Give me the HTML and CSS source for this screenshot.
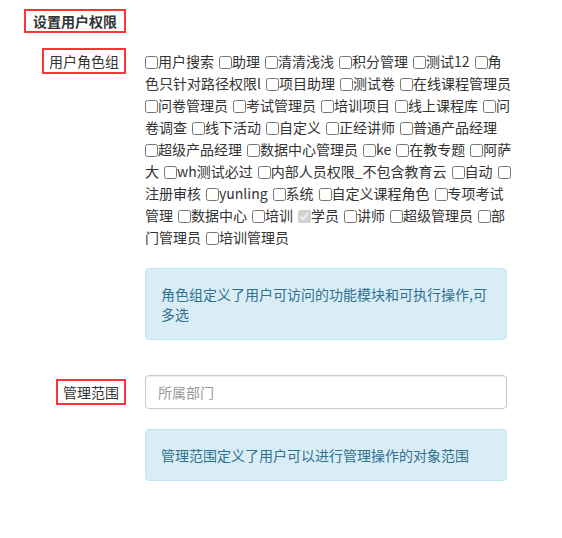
FILE: index.html
```html
<!DOCTYPE html>
<html lang="zh-CN">
<head>
    <meta charset="UTF-8">
    <meta name="viewport" content="width=device-width, initial-scale=1.0">
    <title>设置用户权限</title>
    <link rel="stylesheet" href="styles.css">
</head>
<body>
    <h4 class="title mark">设置用户权限</h4>
    <form class="form">
        <div class="row">
            <div class="label-col"><span class="label mark">用户角色组</span></div>
            <div class="field">
                <div class="roles">
                    <label><input type="checkbox">用户搜索</label>
                    <label><input type="checkbox">助理</label>
                    <label><input type="checkbox">清清浅浅</label>
                    <label><input type="checkbox">积分管理</label>
                    <label><input type="checkbox">测试12</label>
                    <label><input type="checkbox">角色只针对路径权限l</label>
                    <label><input type="checkbox">项目助理</label>
                    <label><input type="checkbox">测试卷</label>
                    <label><input type="checkbox">在线课程管理员</label>
                    <label><input type="checkbox">问卷管理员</label>
                    <label><input type="checkbox">考试管理员</label>
                    <label><input type="checkbox">培训项目</label>
                    <label><input type="checkbox">线上课程库</label>
                    <label><input type="checkbox">问卷调查</label>
                    <label><input type="checkbox">线下活动</label>
                    <label><input type="checkbox">自定义</label>
                    <label><input type="checkbox">正经讲师</label>
                    <label><input type="checkbox">普通产品经理</label>
                    <label><input type="checkbox">超级产品经理</label>
                    <label><input type="checkbox">数据中心管理员</label>
                    <label><input type="checkbox">ke</label>
                    <label><input type="checkbox">在教专题</label>
                    <label><input type="checkbox">阿萨大</label>
                    <label><input type="checkbox">wh测试必过</label>
                    <label><input type="checkbox">内部人员权限_不包含教育云</label>
                    <label><input type="checkbox">自动</label>
                    <label><input type="checkbox">注册审核</label>
                    <label><input type="checkbox">yunling</label>
                    <label><input type="checkbox">系统</label>
                    <label><input type="checkbox">自定义课程角色</label>
                    <label><input type="checkbox">专项考试管理</label>
                    <label><input type="checkbox">数据中心</label>
                    <label><input type="checkbox">培训</label>
                    <label><input type="checkbox" checked disabled>学员</label>
                    <label><input type="checkbox">讲师</label>
                    <label><input type="checkbox">超级管理员</label>
                    <label><input type="checkbox">部门管理员</label>
                    <label><input type="checkbox">培训管理员</label>
                </div>
                <div class="alert">角色组定义了用户可访问的功能模块和可执行操作,可多选</div>
            </div>
        </div>

        <div class="row row-scope">
            <div class="label-col"><span class="label mark">管理范围</span></div>
            <div class="field">
                <input class="input" type="text" placeholder="所属部门">
            </div>
        </div>

        <div class="row">
            <div class="label-col"></div>
            <div class="field">
                <div class="alert">管理范围定义了用户可以进行管理操作的对象范围</div>
            </div>
        </div>
    </form>
</body>
</html>
```

FILE: styles.css
```css
body {
    margin: 0;
    font-family: "Microsoft YaHei", "Noto Sans CJK SC", sans-serif;
    font-size: 14px;
    color: #333;
    background-color: #fff;
}
.mark {
    border: 2px solid #f33;
}
.title {
    display: inline-block;
    margin: 9px 0 0 24px;
    padding: 0 7px;
    font-size: 14px;
    font-weight: bold;
    line-height: 20px;
}
.form {
    width: 507px;
}
.row {
    display: grid;
    grid-template-columns: 126px 362px;
    column-gap: 19px;
    margin-top: 15px;
}
.label-col {
    text-align: right;
}
.label {
    display: inline-block;
    padding: 0 5px;
    line-height: 22px;
}
.roles {
    margin-right: -4.5px;
    padding-top: 2px;
    line-height: 22px;
    word-spacing: 1.86px;
}
.roles input {
    margin: 0;
    width: 13px;
    height: 13px;
    vertical-align: -2px;
}
.alert {
    margin-top: 20px;
    padding: 15px;
    line-height: 20px;
    color: #31708f;
    background-color: #d9edf7;
    border: 1px solid #bce8f1;
    border-radius: 4px;
}
.row-scope {
    margin-top: 35px;
    align-items: center;
}
.input {
    box-sizing: border-box;
    display: block;
    width: 100%;
    height: 34px;
    padding: 6px 12px;
    font-family: inherit;
    font-size: 14px;
    color: #555;
    border: 1px solid #ccc;
    border-radius: 4px;
    box-shadow: inset 0 1px 1px rgba(0, 0, 0, .075);
}
.input::placeholder {
    color: #999;
}
.row-scope + .row {
    margin-top: 0;
}
.row-scope + .row .alert {
    margin-top: 20px;
}
```
